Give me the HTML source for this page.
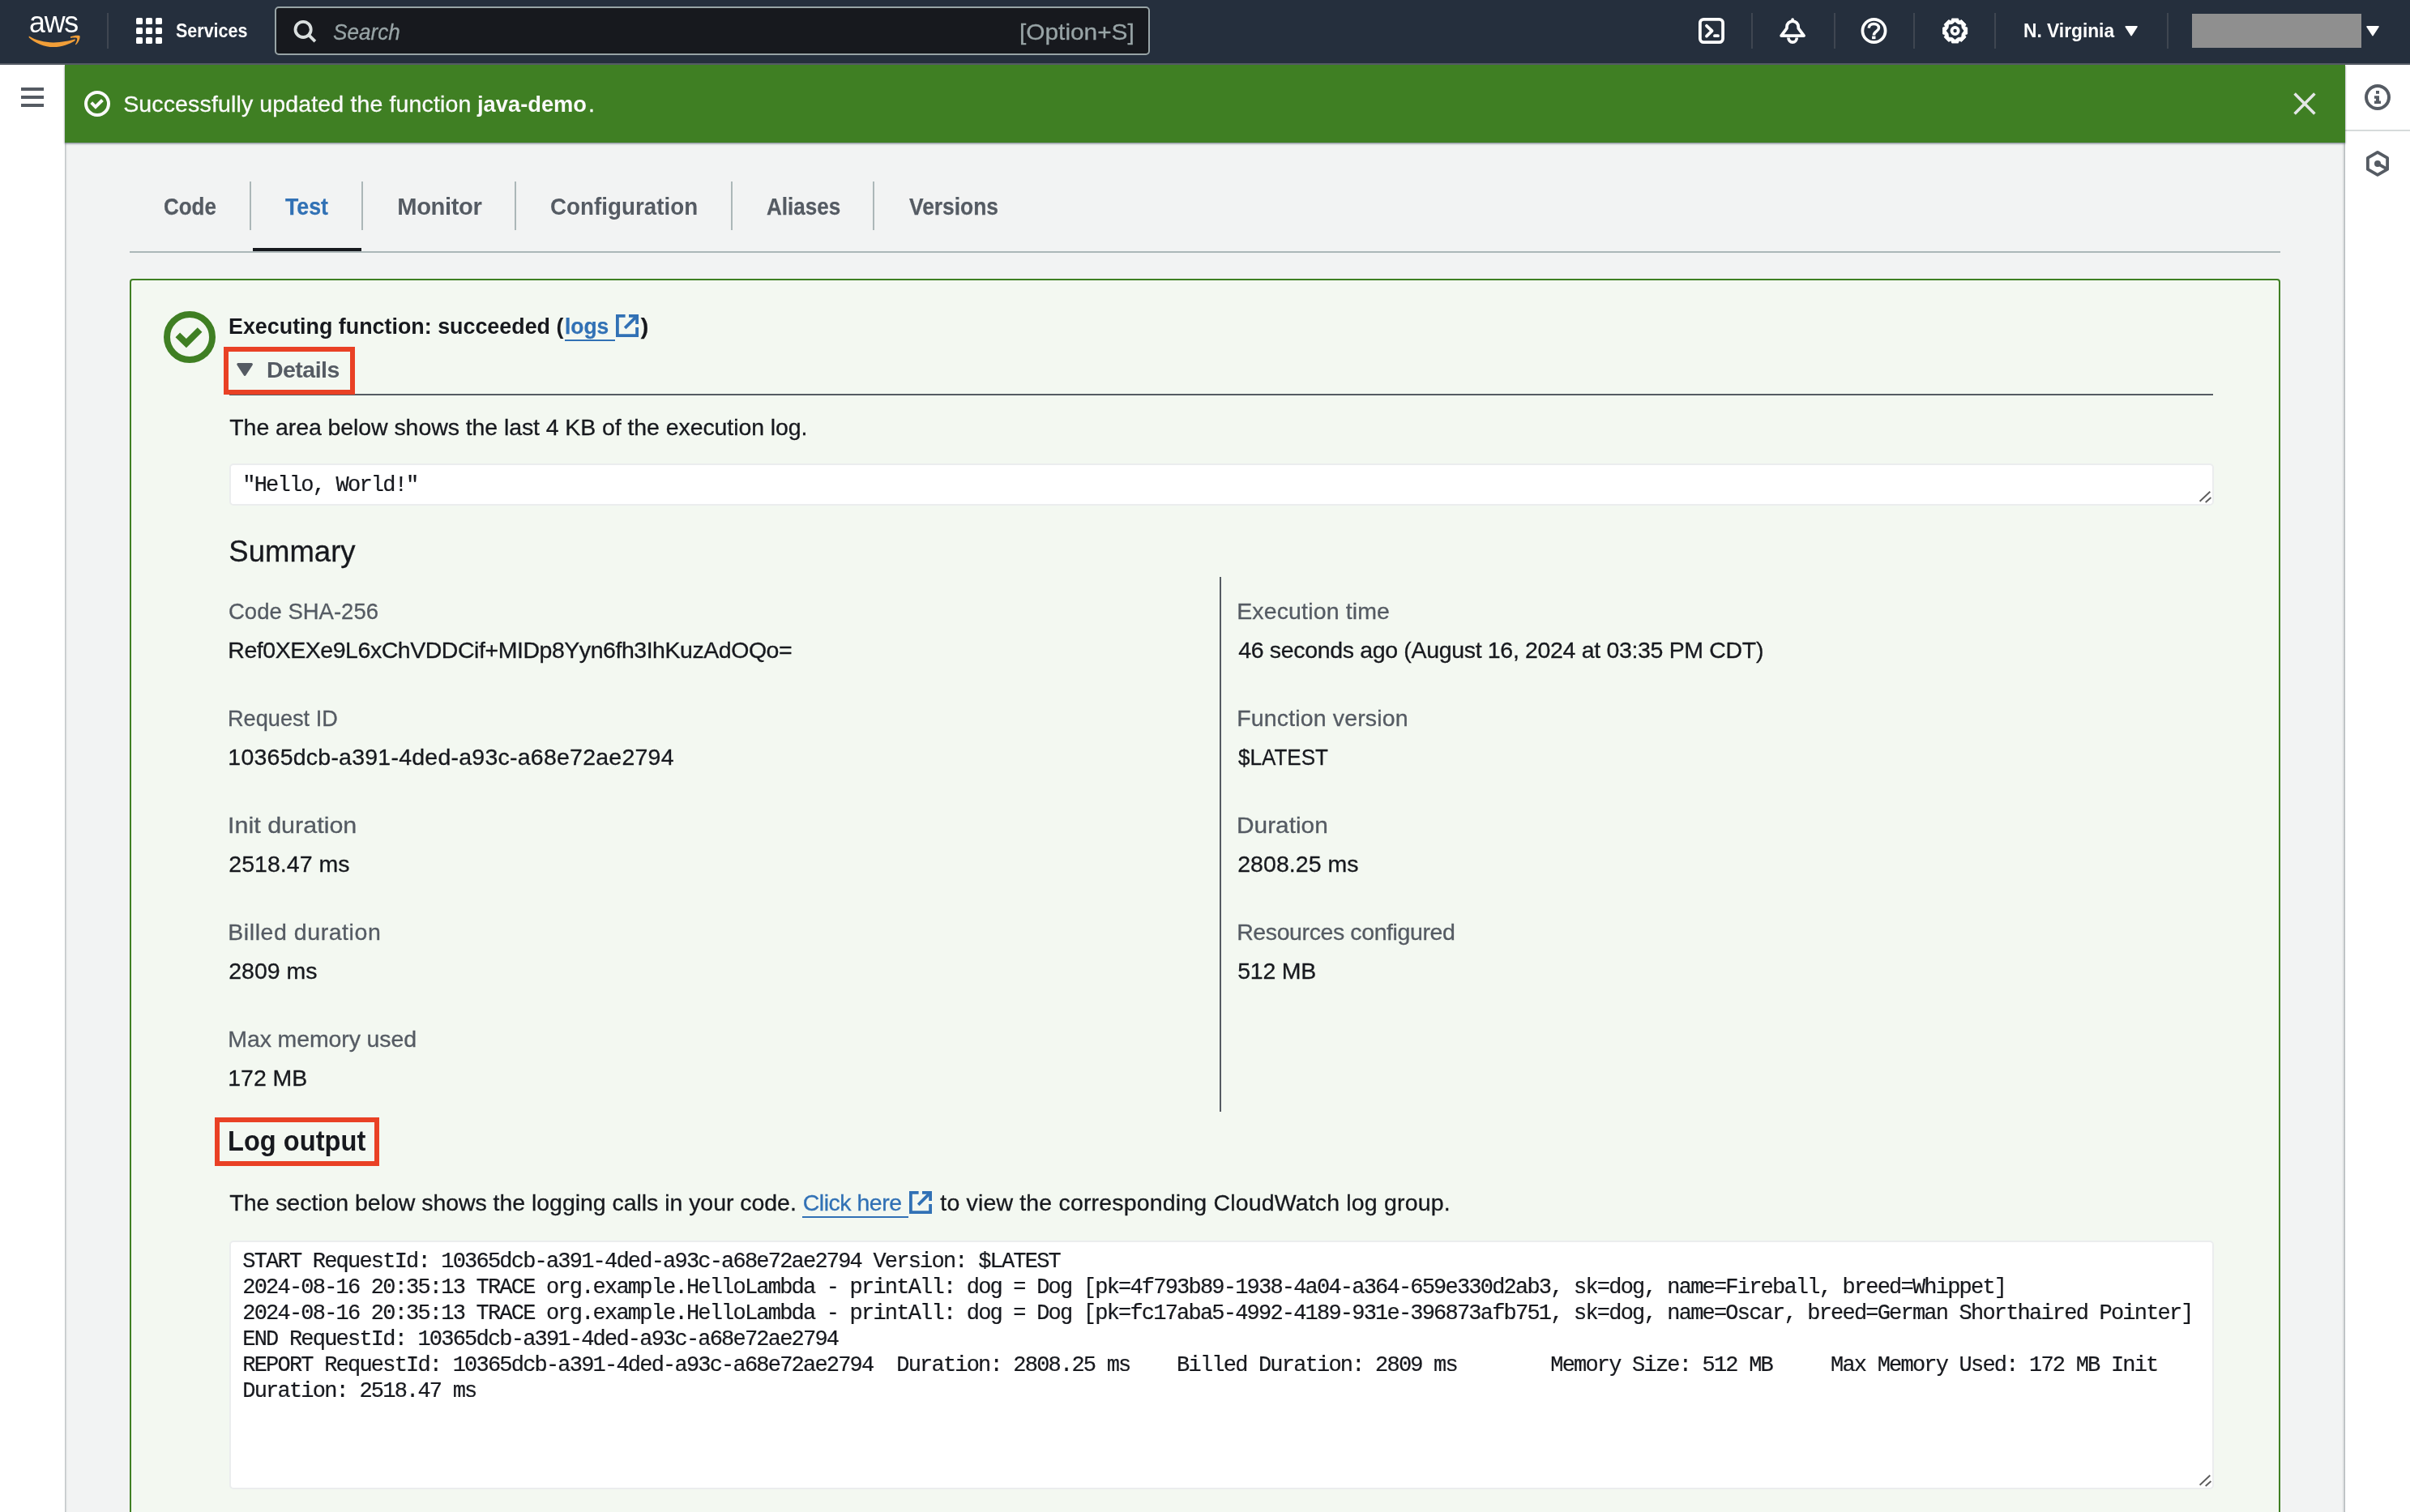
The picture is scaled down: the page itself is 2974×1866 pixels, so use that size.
<!DOCTYPE html><html><head><meta charset="utf-8"><title>java-demo - Lambda</title><style>
html,body{margin:0;padding:0}
body{width:2974px;height:1866px;background:#f2f3f3;font-family:"Liberation Sans",sans-serif}
#root{position:relative;width:2974px;height:1866px;overflow:hidden;background:#f2f3f3}
.a{position:absolute}
.t{position:absolute;white-space:pre;line-height:1;margin:0;padding:0}
.m{position:absolute;white-space:pre;line-height:1;font-family:"Liberation Mono",monospace;color:#17191e;-webkit-text-stroke:.22px #17191e}
.vd{position:absolute;width:2px;top:16px;height:44px;background:#3f4651}
.td{position:absolute;width:2px;top:224px;height:60px;background:#acb7b8}

</style></head><body><div id="root">
<div class="a" style="left:0;top:80px;width:80px;height:1786px;background:#fff"></div>
<div class="a" style="left:80px;top:80px;width:3px;height:1786px;background:linear-gradient(90deg,rgba(0,20,30,.26),rgba(0,20,30,.07) 60%,rgba(0,20,30,0))"></div>
<div class="a" style="left:2890px;top:80px;width:4px;height:1786px;background:linear-gradient(270deg,rgba(0,20,30,.3),rgba(0,20,30,.08) 55%,rgba(0,20,30,0))"></div>
<div class="a" style="left:2894px;top:80px;width:80px;height:1786px;background:#fff"></div>
<div class="a" style="left:2894px;top:160px;width:80px;height:2px;background:#d6dbdb"></div>
<div class="a" style="left:160px;top:310px;width:2654px;height:2px;background:#acb7b8"></div>
<div class="a" style="left:312px;top:306px;width:134px;height:4px;background:#17191e"></div>
<div class="td" style="left:308px"></div>
<div class="td" style="left:446px"></div>
<div class="td" style="left:635px"></div>
<div class="td" style="left:902px"></div>
<div class="td" style="left:1077px"></div>
<div class="a" style="left:160px;top:344px;width:2650px;height:1560px;border:2px solid #3f7f23;border-radius:4px;background:#f3f8f1"></div>
<div class="a" style="left:80px;top:80px;width:2814px;height:96px;background:#3f7f23;box-shadow:0 1px 2px 0 rgba(0,20,40,.45),0 2px 3px 0 rgba(0,20,40,.12)"></div>
<div class="a" style="left:0;top:0;width:2974px;height:78px;background:#252f3d;border-bottom:2px solid #545b65"></div>
<div class="a" style="left:339px;top:8px;width:1076px;height:56px;border:2px solid #98a4a6;border-radius:5px;background:#17191e"></div>
<div class="vd" style="left:132px"></div>
<div class="vd" style="left:2161px"></div>
<div class="vd" style="left:2263px"></div>
<div class="vd" style="left:2361px"></div>
<div class="vd" style="left:2461px"></div>
<div class="vd" style="left:2674px"></div>
<div class="a" style="left:2705px;top:17px;width:209px;height:42px;background:#8f8f8f"></div>
<svg class="a" style="left:0;top:0" width="2974" height="80" viewBox="0 0 2974 80">
<g fill="#f19e38"><path d="M35.8 44.6C44 50 56 52.6 66.4 52.4C76 52.2 86 50.5 92.8 48.3L92.6 50.2C86 54.5 76 58 66.4 58.1C55 58.2 43 53 35.6 46.2Z"/><path d="M86.9 45.2C90 44 95 43.3 98.2 43.9C99.6 45.5 97.5 52 93.6 55.3L92.9 54.8C94.5 52 95.8 48.5 95 47.2C93.5 46.3 90 46.6 87.2 47Z"/></g>
<g fill="#fff">
<rect x="168" y="22" width="8" height="8" rx="1.6"/>
<rect x="180" y="22" width="8" height="8" rx="1.6"/>
<rect x="192" y="22" width="8" height="8" rx="1.6"/>
<rect x="168" y="34" width="8" height="8" rx="1.6"/>
<rect x="180" y="34" width="8" height="8" rx="1.6"/>
<rect x="192" y="34" width="8" height="8" rx="1.6"/>
<rect x="168" y="46" width="8" height="8" rx="1.6"/>
<rect x="180" y="46" width="8" height="8" rx="1.6"/>
<rect x="192" y="46" width="8" height="8" rx="1.6"/>
</g>
<g fill="none" stroke="#dadfdf" stroke-width="3.8"><circle cx="374.1" cy="36.4" r="9.6"/><path d="M380.9 43.2L388.9 51.1"/></g>
<g fill="none" stroke="#fff" stroke-width="3.8" stroke-linecap="round" stroke-linejoin="round"><rect x="2097.9" y="23.9" width="28.2" height="28.2" rx="4.5"/><path d="M2106 31.8L2112.6 38.2L2106 44.6"/><path d="M2116 44.2H2120"/></g>
<g transform="translate(2196 22)" fill="none" stroke="#fff" stroke-width="3.7" stroke-linejoin="round" stroke-linecap="round"><path d="M16.1 2V3.4"/><path d="M2.1 22.1L9 12.8V11.2A7.1 7.1 0 0 1 23.2 11.2V12.8L30.1 22.1Z"/><path d="M10.9 24.4A5.2 5.7 0 0 0 21.3 24.4" stroke-linecap="butt"/></g>
<g transform="translate(2296.5 22)" fill="none" stroke="#fff" stroke-width="3.7"><circle cx="16" cy="16" r="14.1"/><path d="M9.6 12.6C10 9 13 7.6 15.9 7.6C19.5 7.6 22 9.6 22 12.4C22 16.6 15.9 16.6 15.9 21.4" stroke-width="3.5"/><rect x="13.6" y="22.6" width="4.4" height="3.6" fill="#fff" stroke="none"/></g>
<g transform="translate(2396.6 22)"><path d="M12.09 0.90 L19.91 0.90 L20.97 3.99 L23.92 2.56 L29.44 8.08 L28.01 11.03 L31.10 12.09 L31.10 19.91 L28.01 20.97 L29.44 23.92 L23.92 29.44 L20.97 28.01 L19.91 31.10 L12.09 31.10 L11.03 28.01 L8.08 29.44 L2.56 23.92 L3.99 20.97 L0.90 19.91 L0.90 12.09 L3.99 11.03 L2.56 8.08 L8.08 2.56 L11.03 3.99 Z M16.00 4.70 L19.56 7.41 L23.99 8.01 L24.59 12.44 L27.30 16.00 L24.59 19.56 L23.99 23.99 L19.56 24.59 L16.00 27.30 L12.44 24.59 L8.01 23.99 L7.41 19.56 L4.70 16.00 L7.41 12.44 L8.01 8.01 L12.44 7.41 Z" fill="#fff" fill-rule="evenodd" stroke="#fff" stroke-width="0.8" stroke-linejoin="round"/><circle cx="16" cy="16" r="4.1" fill="none" stroke="#fff" stroke-width="3.8"/></g>
<g fill="#fff" stroke="#fff" stroke-width="1.6" stroke-linejoin="round"><path d="M2623.2 32.8H2637L2630.1 43.6Z"/><path d="M2921 32.8H2935L2928 43.6Z"/></g>
</svg>
<svg class="a" style="left:0;top:80px" width="80" height="100" viewBox="0 80 80 100"><g fill="#555b63"><rect x="26" y="108" width="28" height="4"/><rect x="26" y="118" width="28" height="4"/><rect x="26" y="128" width="28" height="4"/></g></svg>
<svg class="a" style="left:2894px;top:80px" width="80" height="160" viewBox="2894 80 80 160"><g fill="none" stroke="#555b63" stroke-width="4"><circle cx="2934" cy="120" r="14"/><path d="M2934 187.9L2946.1 194.9V208.9L2934 215.9L2921.9 208.9V194.9Z" stroke-linejoin="round" stroke-width="3.8"/><path d="M2934 201.9L2946.1 208.9" stroke-width="3.8"/></g><g fill="#555b63"><circle cx="2934" cy="201.9" r="4"/><rect x="2932" y="112" width="4" height="3.8"/><path d="M2930 118.3H2936V124.5H2938V128H2930V124.5H2932V121.7H2930Z"/></g></svg>
<svg class="a" style="left:104px;top:112px" width="32" height="32" viewBox="0 0 64 64" fill="none" stroke="#fafafa" stroke-width="8"><circle cx="32" cy="32" r="28"/><path d="M17.4 29.4L27.8 39.7L44.8 23"/></svg>
<svg class="a" style="left:2826px;top:110px" width="36" height="36" viewBox="2826 110 36 36" fill="none" stroke="#e3e6e6" stroke-width="3.6"><path d="M2831.6 115.6L2856.4 140.4M2856.4 115.6L2831.6 140.4"/></svg>
<svg class="a" style="left:202px;top:384px" width="64" height="64" viewBox="0 0 64 64" fill="none" stroke="#3f7f23" stroke-width="8"><circle cx="32" cy="32" r="28"/><path d="M17.3 29.3L27.9 39.7L44.6 23"/></svg>
<div class="a" style="left:697px;top:419px;width:62px;height:2px;background:#3171b5"></div>
<svg style="position:absolute;left:760px;top:388px" width="28" height="28" viewBox="0 0 28 28" fill="none" stroke="#3171b5" stroke-width="3.8" stroke-linejoin="miter"><path d="M11.6 1.9H1.9V26.1H26.1V16"/><path d="M16 1.9H26.1V12"/><path d="M26.1 1.9L11.2 16.8"/></svg>
<div class="a" style="left:283px;top:486px;width:2448px;height:2px;background:#555b63"></div>
<div class="a" style="left:276px;top:428px;width:150px;height:47px;border:6px solid #e94125"></div>
<svg class="a" style="left:290px;top:446px" width="24" height="20" viewBox="290 446 24 20"><path d="M293.8 449.6H310.4L302.1 462.4Z" fill="#555b63" stroke="#555b63" stroke-width="3" stroke-linejoin="round"/></svg>
<div class="a" style="left:283px;top:572px;width:2445px;height:48px;border:2px solid #ebedee;border-radius:5px;background:#fff"></div>
<div class="a" style="left:283px;top:1531px;width:2445px;height:303px;border:2px solid #ebedee;border-radius:5px;background:#fff"></div>
<svg class="a" style="left:2708px;top:600px" width="24" height="24" viewBox="-24 -24 24 24" stroke="#5c5c5c" stroke-width="1.9" fill="none"><path d="M-17.4 -5.3L-4.7 -17.2M-10.3 -4L-3.6 -10"/></svg>
<svg class="a" style="left:2708px;top:1814px" width="24" height="24" viewBox="-24 -24 24 24" stroke="#5c5c5c" stroke-width="1.9" fill="none"><path d="M-17.4 -5.3L-4.7 -17.2M-10.3 -4L-3.6 -10"/></svg>
<div class="a" style="left:1505px;top:712px;width:2px;height:660px;background:#555b63"></div>
<div class="a" style="left:265px;top:1379px;width:191px;height:48px;border:6px solid #e94125"></div>
<div class="a" style="left:990px;top:1501px;width:131px;height:2px;background:#3171b5"></div>
<svg style="position:absolute;left:1122px;top:1470px" width="28" height="28" viewBox="0 0 28 28" fill="none" stroke="#3171b5" stroke-width="3.8" stroke-linejoin="miter"><path d="M11.6 1.9H1.9V26.1H26.1V16"/><path d="M16 1.9H26.1V12"/><path d="M26.1 1.9L11.2 16.8"/></svg>
<div id="txt" style="position:absolute;left:0;top:0;width:2974px;height:1866px;will-change:transform">
<div class="t" id="aws" style="left:36.4px;top:6.8px;font:400 36.3px 'Liberation Sans',sans-serif;color:#fff;letter-spacing:-1.2px;transform:scaleX(.985);transform-origin:0 0">aws</div>
<div class="t" id="t0" style="font:normal 700 24.5px 'Liberation Sans', sans-serif;color:#ffffff;left:216.80px;top:23.90px;transform:scaleX(0.8774);transform-origin:0 0">Services</div>
<div class="t" id="t1" style="font:italic 400 28.5px 'Liberation Sans', sans-serif;color:#98a4a6;-webkit-text-stroke:.3px;left:411.00px;top:23.40px;transform:scaleX(0.9167);transform-origin:0 0">Search</div>
<div class="t" id="t2" style="font:normal 400 28.5px 'Liberation Sans', sans-serif;color:#98a4a6;-webkit-text-stroke:.3px;left:1257.91px;top:23.40px;transform:scaleX(1.0468);transform-origin:0 0">[Option+S]</div>
<div class="t" id="t3" style="font:normal 700 24.5px 'Liberation Sans', sans-serif;color:#ffffff;left:2496.67px;top:24.10px;transform:scaleX(0.9285);transform-origin:0 0">N. Virginia</div>
<div class="t" id="t4" style="font:normal 400 28.5px 'Liberation Sans', sans-serif;color:#fafafa;-webkit-text-stroke:.3px;left:152.20px;top:112.00px;letter-spacing:0.142px">Successfully updated the function</div>
<div class="t" id="t5" style="font:normal 700 28.5px 'Liberation Sans', sans-serif;color:#fafafa;left:588.66px;top:112.00px;transform:scaleX(0.9579);transform-origin:0 0">java-demo</div>
<div class="t" id="t6" style="font:normal 400 28.5px 'Liberation Sans', sans-serif;color:#fafafa;-webkit-text-stroke:.3px;left:726.00px;top:112.00px;letter-spacing:0.000px">.</div>
<div class="t" id="t7" style="font:normal 700 29.2px 'Liberation Sans', sans-serif;color:#555b63;-webkit-text-stroke:.25px;left:202.31px;top:238.50px;transform:scaleX(0.8894);transform-origin:0 0">Code</div>
<div class="t" id="t8" style="font:normal 700 29.2px 'Liberation Sans', sans-serif;color:#3171b5;-webkit-text-stroke:.25px;left:352.40px;top:238.50px;transform:scaleX(0.9152);transform-origin:0 0">Test</div>
<div class="t" id="t9" style="font:normal 700 29.2px 'Liberation Sans', sans-serif;color:#555b63;left:490.30px;top:238.50px;letter-spacing:-0.421px">Monitor</div>
<div class="t" id="t10" style="font:normal 700 29.2px 'Liberation Sans', sans-serif;color:#555b63;left:679.15px;top:238.50px;transform:scaleX(0.9521);transform-origin:0 0">Configuration</div>
<div class="t" id="t11" style="font:normal 700 29.2px 'Liberation Sans', sans-serif;color:#555b63;-webkit-text-stroke:.25px;left:945.90px;top:238.50px;transform:scaleX(0.8912);transform-origin:0 0">Aliases</div>
<div class="t" id="t12" style="font:normal 700 29.2px 'Liberation Sans', sans-serif;color:#555b63;-webkit-text-stroke:.25px;left:1121.60px;top:238.50px;transform:scaleX(0.9041);transform-origin:0 0">Versions</div>
<div class="t" id="t13" style="font:normal 700 28.5px 'Liberation Sans', sans-serif;color:#17191e;left:282.06px;top:386.20px;transform:scaleX(0.9424);transform-origin:0 0">Executing function: succeeded (</div>
<div class="t" id="t14" style="font:normal 700 28.5px 'Liberation Sans', sans-serif;color:#3171b5;-webkit-text-stroke:.25px;left:697.17px;top:386.20px;transform:scaleX(0.9271);transform-origin:0 0">logs</div>
<div class="t" id="t15" style="font:normal 700 28.5px 'Liberation Sans', sans-serif;color:#17191e;-webkit-text-stroke:.25px;left:790.70px;top:386.20px;letter-spacing:0.000px">)</div>
<div class="t" id="t16" style="font:normal 700 28.5px 'Liberation Sans', sans-serif;color:#555b63;left:328.90px;top:440.00px;letter-spacing:-0.502px">Details</div>
<div class="t" id="t17" style="font:normal 400 28.5px 'Liberation Sans', sans-serif;color:#17191e;-webkit-text-stroke:.3px;left:283.30px;top:510.50px;letter-spacing:-0.081px">The area below shows the last 4 KB of the execution log.</div>
<div class="t" id="t18" style="font:normal 400 36.5px 'Liberation Sans', sans-serif;color:#17191e;-webkit-text-stroke:.3px;left:282.30px;top:659.50px;letter-spacing:0.015px">Summary</div>
<div class="t" id="t19" style="font:normal 400 28.5px 'Liberation Sans', sans-serif;color:#555b63;-webkit-text-stroke:.3px;left:282.33px;top:738.00px;transform:scaleX(0.9650);transform-origin:0 0">Code SHA-256</div>
<div class="t" id="t20" style="font:normal 400 28.5px 'Liberation Sans', sans-serif;color:#17191e;-webkit-text-stroke:.3px;left:281.30px;top:786.40px;letter-spacing:-0.458px">Ref0XEXe9L6xChVDDCif+MIDp8Yyn6fh3IhKuzAdOQo=</div>
<div class="t" id="t21" style="font:normal 400 28.5px 'Liberation Sans', sans-serif;color:#555b63;-webkit-text-stroke:.3px;left:281.39px;top:870.00px;transform:scaleX(0.9529);transform-origin:0 0">Request ID</div>
<div class="t" id="t22" style="font:normal 400 28.5px 'Liberation Sans', sans-serif;color:#17191e;-webkit-text-stroke:.3px;left:281.30px;top:918.40px;letter-spacing:0.236px">10365dcb-a391-4ded-a93c-a68e72ae2794</div>
<div class="t" id="t23" style="font:normal 400 28.5px 'Liberation Sans', sans-serif;color:#555b63;-webkit-text-stroke:.3px;left:281.16px;top:1002.00px;transform:scaleX(1.0698);transform-origin:0 0">Init duration</div>
<div class="t" id="t24" style="font:normal 400 28.5px 'Liberation Sans', sans-serif;color:#17191e;-webkit-text-stroke:.3px;left:282.30px;top:1050.40px;letter-spacing:0.036px">2518.47 ms</div>
<div class="t" id="t25" style="font:normal 400 28.5px 'Liberation Sans', sans-serif;color:#555b63;-webkit-text-stroke:.3px;left:281.30px;top:1134.00px;letter-spacing:0.560px">Billed duration</div>
<div class="t" id="t26" style="font:normal 400 28.5px 'Liberation Sans', sans-serif;color:#17191e;-webkit-text-stroke:.3px;left:282.30px;top:1182.40px;letter-spacing:-0.027px">2809 ms</div>
<div class="t" id="t27" style="font:normal 400 28.5px 'Liberation Sans', sans-serif;color:#555b63;-webkit-text-stroke:.3px;left:281.30px;top:1266.00px;letter-spacing:-0.118px">Max memory used</div>
<div class="t" id="t28" style="font:normal 400 28.5px 'Liberation Sans', sans-serif;color:#17191e;-webkit-text-stroke:.3px;left:281.30px;top:1314.40px;letter-spacing:-0.042px">172 MB</div>
<div class="t" id="t29" style="font:normal 400 28.5px 'Liberation Sans', sans-serif;color:#555b63;-webkit-text-stroke:.3px;left:1526.20px;top:738.00px;letter-spacing:0.141px">Execution time</div>
<div class="t" id="t30" style="font:normal 400 28.5px 'Liberation Sans', sans-serif;color:#17191e;-webkit-text-stroke:.3px;left:1528.20px;top:786.40px;letter-spacing:-0.332px">46 seconds ago (August 16, 2024 at 03:35 PM CDT)</div>
<div class="t" id="t31" style="font:normal 400 28.5px 'Liberation Sans', sans-serif;color:#555b63;-webkit-text-stroke:.3px;left:1526.20px;top:870.00px;letter-spacing:0.150px">Function version</div>
<div class="t" id="t32" style="font:normal 400 28.5px 'Liberation Sans', sans-serif;color:#17191e;-webkit-text-stroke:.3px;left:1528.20px;top:918.40px;transform:scaleX(0.9139);transform-origin:0 0">$LATEST</div>
<div class="t" id="t33" style="font:normal 400 28.5px 'Liberation Sans', sans-serif;color:#555b63;-webkit-text-stroke:.3px;left:1526.11px;top:1002.00px;transform:scaleX(1.0465);transform-origin:0 0">Duration</div>
<div class="t" id="t34" style="font:normal 400 28.5px 'Liberation Sans', sans-serif;color:#17191e;-webkit-text-stroke:.3px;left:1527.20px;top:1050.40px;letter-spacing:0.047px">2808.25 ms</div>
<div class="t" id="t35" style="font:normal 400 28.5px 'Liberation Sans', sans-serif;color:#555b63;-webkit-text-stroke:.3px;left:1526.20px;top:1134.00px;letter-spacing:-0.399px">Resources configured</div>
<div class="t" id="t36" style="font:normal 400 28.5px 'Liberation Sans', sans-serif;color:#17191e;-webkit-text-stroke:.3px;left:1527.20px;top:1182.40px;letter-spacing:-0.242px">512 MB</div>
<div class="t" id="t37" style="font:normal 700 35px 'Liberation Sans', sans-serif;color:#17191e;left:281.14px;top:1387.80px;transform:scaleX(0.9319);transform-origin:0 0">Log output</div>
<div class="t" id="t38" style="font:normal 400 28.5px 'Liberation Sans', sans-serif;color:#17191e;-webkit-text-stroke:.3px;left:283.30px;top:1467.60px;letter-spacing:-0.042px">The section below shows the logging calls in your code.</div>
<div class="t" id="t39" style="font:normal 400 28.5px 'Liberation Sans', sans-serif;color:#3171b5;-webkit-text-stroke:.3px;left:990.70px;top:1467.60px;letter-spacing:-0.484px">Click here</div>
<div class="t" id="t40" style="font:normal 400 28.5px 'Liberation Sans', sans-serif;color:#17191e;-webkit-text-stroke:.3px;left:1160.30px;top:1467.60px;letter-spacing:0.169px">to view the corresponding CloudWatch log group.</div>
<div class="m" id="m0" style="left:299.30px;top:586.20px;font-size:27px;letter-spacing:-1.7926px">&quot;Hello, World!&quot;</div>
<div class="m" id="m1" style="left:299.30px;top:1543.90px;font-size:27px;letter-spacing:-1.7926px">START RequestId: 10365dcb-a391-4ded-a93c-a68e72ae2794 Version: $LATEST</div>
<div class="m" id="m2" style="left:299.30px;top:1575.93px;font-size:27px;letter-spacing:-1.7926px">2024-08-16 20:35:13 TRACE org.example.HelloLambda - printAll: dog = Dog [pk=4f793b89-1938-4a04-a364-659e330d2ab3, sk=dog, name=Fireball, breed=Whippet]</div>
<div class="m" id="m3" style="left:299.30px;top:1607.96px;font-size:27px;letter-spacing:-1.7926px">2024-08-16 20:35:13 TRACE org.example.HelloLambda - printAll: dog = Dog [pk=fc17aba5-4992-4189-931e-396873afb751, sk=dog, name=Oscar, breed=German Shorthaired Pointer]</div>
<div class="m" id="m4" style="left:299.30px;top:1639.99px;font-size:27px;letter-spacing:-1.7926px">END RequestId: 10365dcb-a391-4ded-a93c-a68e72ae2794</div>
<div class="m" id="m5" style="left:299.30px;top:1672.02px;font-size:27px;letter-spacing:-1.7926px">REPORT RequestId: 10365dcb-a391-4ded-a93c-a68e72ae2794</div>
<div class="m" id="m6" style="left:1106.26px;top:1672.02px;font-size:27px;letter-spacing:-1.7926px">Duration: 2808.25 ms</div>
<div class="m" id="m7" style="left:1452.10px;top:1672.02px;font-size:27px;letter-spacing:-1.7926px">Billed Duration: 2809 ms</div>
<div class="m" id="m8" style="left:1913.22px;top:1672.02px;font-size:27px;letter-spacing:-1.7926px">Memory Size: 512 MB</div>
<div class="m" id="m9" style="left:2259.06px;top:1672.02px;font-size:27px;letter-spacing:-1.7926px">Max Memory Used: 172 MB</div>
<div class="m" id="m10" style="left:2604.90px;top:1672.02px;font-size:27px;letter-spacing:-1.7926px">Init</div>
<div class="m" id="m11" style="left:299.30px;top:1704.05px;font-size:27px;letter-spacing:-1.7926px">Duration: 2518.47 ms</div>
</div>
</div></body></html>
